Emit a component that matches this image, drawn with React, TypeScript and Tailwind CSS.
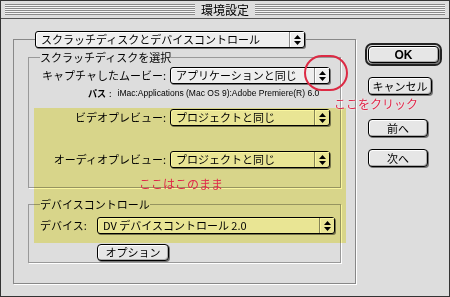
import React from 'react';

const jp = "font-['Osaka','Noto_Sans_CJK_JP',sans-serif]";

function Arrows() {
    return (
        <svg width="7" height="10" viewBox="0 0 7 10">
            <polygon points="3.5,0 7,4 0,4" fill="#000" />
            <polygon points="0,6 7,6 3.5,10" fill="#000" />
        </svg>
    );
}

function Popup({ label, className }: { label: string; className: string }) {
    return (
        <div className={`flex h-[17px] items-stretch rounded-[3px] border border-black bg-[#eeeeee] shadow-[1px_1px_0_#777,inset_1px_1px_0_#fff] ${className}`}>
            <span className="flex-1 overflow-hidden whitespace-nowrap pl-[5px] text-[11px] leading-[15px] text-black">{label}</span>
            <span className="flex w-[15px] items-center justify-center border-l border-[#888] shadow-[inset_1px_1px_0_#fff]">
                <Arrows />
            </span>
        </div>
    );
}

function Btn({ label, className }: { label: string; className: string }) {
    return (
        <div className={`flex items-center justify-center rounded-[4px] border border-black bg-[#e6e6e6] text-[11px] leading-none text-black shadow-[1px_1px_0_#777,inset_1px_1px_0_#fff,inset_-1px_-1px_0_#aaa] ${className}`}>
            {label}
        </div>
    );
}

function Row({ label, popup }: { label: string; popup: string }) {
    return (
        <div className="flex items-center">
            <span className="w-[141px] pr-[4px] text-right text-[11px] leading-[17px] whitespace-nowrap">{label}</span>
            <Popup label={popup} className="w-[160px]" />
        </div>
    );
}

export default function App() {
    return (
        <div className={`relative h-[297px] w-[450px] overflow-hidden border border-[#333] bg-[#dddddd] text-black ${jp}`}>
            {/* title bar */}
            <div className="flex h-[18px] items-center gap-[4px] border-b border-[#555] px-[4px]">
                <div className="h-[11px] flex-1 bg-[image:repeating-linear-gradient(#8a8a8a_0px_1px,#f4f4f4_1px_2px)]" />
                <span className="px-[2px] text-[12px] leading-[14px]">環境設定</span>
                <div className="h-[11px] flex-1 bg-[image:repeating-linear-gradient(#8a8a8a_0px_1px,#f4f4f4_1px_2px)]" />
            </div>

            <div className="flex">
                {/* main panel */}
                <div className="pl-[12px] pt-[12px]">
                    <fieldset className="h-[253px] w-[343px] border border-[#888] shadow-[1px_1px_0_#fff]">
                        <legend className="ml-[21px]">
                            <Popup label="スクラッチディスクとデバイスコントロール" className="w-[270px]" />
                        </legend>

                        <fieldset className="mx-[14px] mt-[2px] border border-[#999] pb-[19px] shadow-[1px_1px_0_#fff]">
                            <legend className="ml-[11px] text-[11px] leading-[14px]">スクラッチディスクを選択</legend>
                            <div className="mt-[3px]">
                                <Row label="キャプチャしたムービー:" popup="アプリケーションと同じ" />
                            </div>
                            <div className="mt-[4px] flex h-[11px] items-center pl-[59px] text-[9px] leading-none">
                                <span className="font-bold">パス</span>
                                <span className="ml-[3px] mr-[6px]">:</span>
                                <span className="font-['Liberation_Sans',sans-serif] text-[8.5px]">iMac:Applications (Mac OS 9):Adobe Premiere(R) 6.0</span>
                            </div>
                            <div className="mt-[10px]">
                                <Row label="ビデオプレビュー:" popup="プロジェクトと同じ" />
                            </div>
                            <div className="mt-[25px]">
                                <Row label="オーディオプレビュー:" popup="プロジェクトと同じ" />
                            </div>
                        </fieldset>

                        <fieldset className="mx-[14px] mt-[9px] border border-[#999] pb-[1px] shadow-[1px_1px_0_#fff]">
                            <legend className="ml-[11px] text-[11px] leading-[14px]">デバイスコントロール</legend>
                            <div className="mt-[6px] flex items-center pl-[11px]">
                                <span className="w-[57px] text-[11px] leading-[17px]">デバイス:</span>
                                <Popup label="DV デバイスコントロール 2.0" className="w-[238px]" />
                            </div>
                            <div className="mt-[10px] pl-[68px]">
                                <Btn label="オプション" className="h-[17px] w-[72px]" />
                            </div>
                        </fieldset>
                    </fieldset>
                </div>

                {/* buttons */}
                <div className="ml-[9px] flex flex-col pt-[24px]">
                    <div className="h-[23px] w-[77px] rounded-[7px] border-2 border-[#222] bg-[#dddddd] p-[1px]">
                        <Btn label="OK" className="h-full w-full font-['Liberation_Sans',sans-serif] font-bold text-[12px]" />
                    </div>
                    <Btn label="キャンセル" className="ml-[3px] mt-[11px] h-[18px] w-[64px]" />
                    <Btn label="前へ" className="ml-[3px] mt-[24px] h-[18px] w-[60px]" />
                    <Btn label="次へ" className="ml-[3px] mt-[12px] h-[18px] w-[60px]" />
                </div>
            </div>

            {/* annotations */}
            <div className="pointer-events-none absolute left-[33px] top-[107px] h-[135px] w-[312px] bg-[#faf69f] mix-blend-multiply blur-[0.5px]" />
            <div className="pointer-events-none absolute left-[303px] top-[54px] h-[36px] w-[44px] rounded-full border-2 border-[#dc2a44]" />
            <span className="absolute left-[333px] top-[96px] text-[12px] leading-[14px] text-[#e0284a] [text-shadow:0_0_2px_#fff]">ここをクリック</span>
            <span className="absolute left-[138px] top-[176px] text-[12px] leading-[14px] text-[#e0284a]">ここはこのまま</span>
        </div>
    );
}
